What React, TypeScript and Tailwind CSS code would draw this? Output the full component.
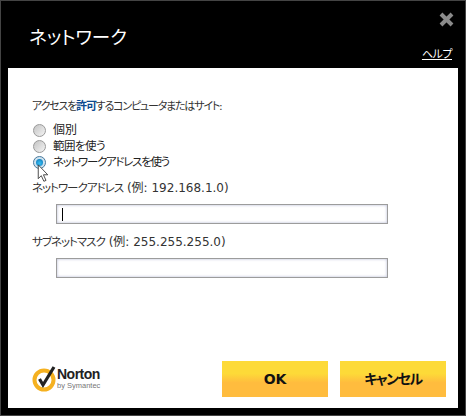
const font = "font-['DejaVu_Sans','Noto_Sans_CJK_JP',sans-serif] [font-feature-settings:'palt']";

function Radio({ checked, label, textClass }: { checked?: boolean; label: string; textClass: string }) {
  return (
    <div className="flex h-4 items-center">
      {checked ? (
        <span className="flex h-[13px] w-[13px] items-center justify-center rounded-full border border-[#4a7a9c] bg-[#cfe3f0]">
          <span className="h-[7px] w-[7px] rounded-full bg-[radial-gradient(circle_at_50%_60%,#37c0f5,#0a6fb0)]" />
        </span>
      ) : (
        <span className="h-[13px] w-[13px] rounded-full border border-[#9a9a9a] bg-[linear-gradient(135deg,#c4c4c4,#f4f4f4)]" />
      )}
      <span className={`ml-[7px] leading-4 text-[#222] ${textClass}`}>{label}</span>
    </div>
  );
}

function Field({ kana, hint, caret }: { kana: string; hint: string; caret?: boolean }) {
  return (
    <div>
      <div className="h-4 text-[12px] leading-4 whitespace-nowrap text-[#333]">
        <span className="text-[11.5px] tracking-[-1px]">{kana}</span> {hint}
      </div>
      <div className="mt-2 ml-6 flex h-5 w-[332px] items-center border border-[#9c9c9c] bg-white pl-[5px] shadow-[inset_0_0_3px_#b4b7d2]">
        {caret && <span className="h-[13px] w-px bg-black" />}
      </div>
    </div>
  );
}

function YellowButton({ label, textClass }: { label: string; textClass?: string }) {
  return (
    <button className={`h-9 w-[106px] bg-[linear-gradient(#fdda38_0%,#fdda38_35%,#ffbc3e_60%,#ffbc3e_100%)] text-[14px] font-bold text-[#111] ${textClass ?? ""}`}>
      {label}
    </button>
  );
}

export default function App() {
  return (
    <div className={`${font} relative flex h-[416px] w-[466px] flex-col border border-[#444] bg-black`}>
      <div className="flex h-[67px] justify-between pr-[11px] pl-[28px]">
        <h1 className="mt-[23px] text-[18.5px] leading-7 font-normal text-white">ネットワーク</h1>
        <div className="flex flex-col items-end">
          <svg className="mt-[11px]" width="15" height="15" viewBox="0 0 15 15">
            <path d="M2 2 L13 13 M13 2 L2 13" stroke="#8a8a8a" strokeWidth="4" />
          </svg>
          <a className="mt-[21px] mr-[2px] text-[11px] leading-[14px] tracking-[-0.5px] text-white underline">ヘルプ</a>
        </div>
      </div>
      <div className="mx-[7px] flex h-[340px] flex-col bg-white pt-[31px] pl-6">
        <p className="text-[11px] leading-4 tracking-[-1.2px] whitespace-nowrap text-[#333]">
          アクセスを<b className="text-[#0b4a8f]">許可</b>するコンピュータまたはサイト:
        </p>
        <div className="mt-[7px] ml-px">
          <Radio label="個別" textClass="text-[12px]" />
          <Radio label="範囲を使う" textClass="text-[11.5px] tracking-[-0.5px]" />
          <Radio checked label="ネットワークアドレスを使う" textClass="text-[11.5px] tracking-[-1.3px]" />
        </div>
        <div className="mt-[10px] flex flex-col gap-[10px]">
          <Field caret kana="ネットワークアドレス" hint="(例: 192.168.1.0)" />
          <Field kana="サブネットマスク" hint="(例: 255.255.255.0)" />
        </div>
        <div className="mt-auto mb-[11px] flex items-end justify-between pr-3">
          <div className="mb-[5px] flex items-center">
            <svg width="27" height="28" viewBox="0 0 27 28">
              <circle cx="12" cy="16" r="9.5" fill="none" stroke="#f5b120" strokeWidth="4" />
              <path d="M7.5 15 L11 21 L22 3" fill="none" stroke="#222" strokeWidth="3.2" />
            </svg>
            <div className="-ml-[2px] flex flex-col font-['Liberation_Sans',sans-serif]">
              <span className="text-[14px] leading-[14px] font-bold tracking-[-0.5px] text-[#222]">Norton</span>
              <span className="text-[7.5px] leading-[9px] text-[#777]">by Symantec</span>
            </div>
          </div>
          <div className="flex gap-3">
            <YellowButton label="OK" />
            <YellowButton label="キャンセル" textClass="tracking-[-1.4px]" />
          </div>
        </div>
      </div>
      <svg className="absolute top-[163px] left-[35px]" width="14" height="19" viewBox="0 0 14 22">
        <path d="M1.5 1 V17 L5 13.5 L8 20 L10.5 19 L7.5 12.5 H12.5 Z" fill="#fff" stroke="#333" strokeWidth="1" />
      </svg>
    </div>
  );
}
